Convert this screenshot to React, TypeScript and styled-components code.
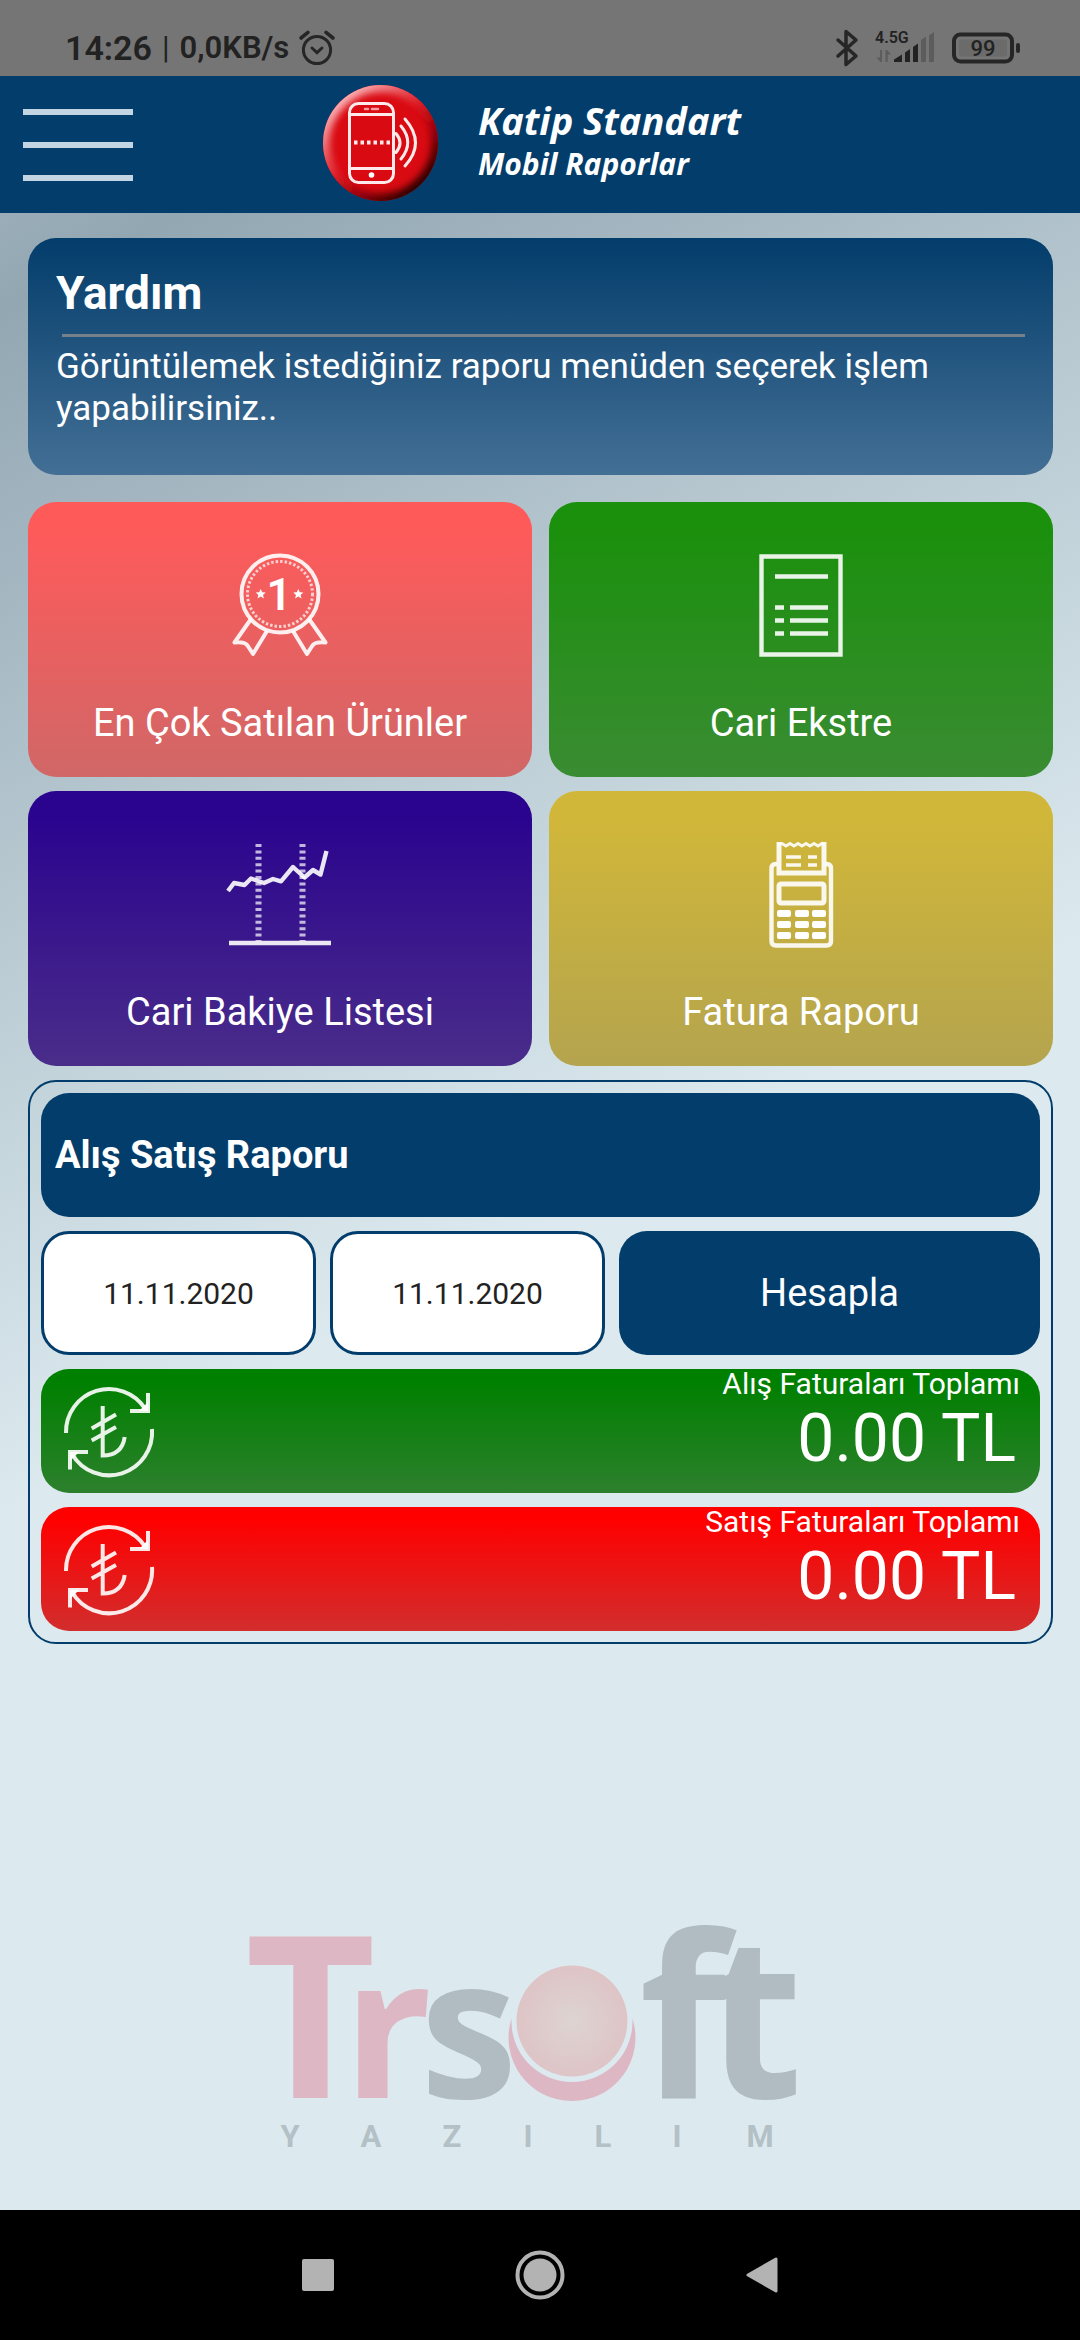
import React, { useState } from "react";
import styled, { createGlobalStyle } from "styled-components";

const navy = "#033d6b";
const sans = `Roboto, "Noto Sans", sans-serif`;

const GlobalStyle = createGlobalStyle`
  *, *::before, *::after { box-sizing: border-box; }
  body { margin: 0; font-family: ${sans}; }
  h1, h2, p { margin: 0; }
  button, input { font-family: inherit; margin: 0; }
  svg { display: block; flex: none; overflow: visible; }
`;

const Screen = styled.div`
  display: flex;
  flex-direction: column;
  min-height: 100vh;
`;

const StatusBar = styled.div`
  display: flex;
  align-items: flex-end;
  justify-content: space-between;
  height: 76px;
  padding: 0 60px 8px 65px;
  background: #757575;
  color: #222;
`;

const StatusGroup = styled.div<{ $gap: number }>`
  display: flex;
  align-items: center;
  gap: ${(p) => p.$gap}px;
  height: 40px;
`;

const StatusText = styled.span<{ $size: number; $weight?: number }>`
  font-size: ${(p) => p.$size}px;
  font-weight: ${(p) => p.$weight ?? 600};
  line-height: 40px;
`;

const Header = styled.header`
  display: grid;
  grid-template-columns: 1fr auto 1fr;
  align-items: center;
  height: 137px;
  padding: 0 23px;
  background: ${navy};
`;

const MenuButton = styled.button`
  display: flex;
  flex-direction: column;
  gap: 27px;
  width: 110px;
  padding: 0;
  border: 0;
  background: none;
`;

const MenuBar = styled.span`
  height: 6px;
  background: #c3d5e3;
`;

const Brand = styled.div`
  display: flex;
  align-items: center;
  gap: 40px;
  padding: 0 16px 4px 0;
`;

const BrandText = styled.div`
  color: #fff;
  font-family: "Open Sans", "Noto Sans", sans-serif;
  font-weight: 700;
  font-style: italic;
`;

const BrandName = styled.h1`
  font-size: 38px;
  line-height: 42px;
`;

const BrandSub = styled.p`
  font-size: 30px;
  line-height: 46px;
`;

const Main = styled.main`
  flex: 1;
  display: flex;
  flex-direction: column;
  padding: 25px 27px 50px 28px;
  background: linear-gradient(152deg, #9aadb9 0, #93a7b3 84px, #dceaef 1150px);
`;

const HelpCard = styled.section`
  padding: 28px 28px 45px;
  border-radius: 28px;
  background: linear-gradient(${navy}, #436f95);
  color: #fff;
`;

const HelpTitle = styled.h2`
  font-size: 46px;
  line-height: 54px;
`;

const Rule = styled.hr`
  height: 3px;
  margin: 14px 0 9px 6px;
  border: 0;
  background: #74808a;
`;

const HelpText = styled.p`
  font-size: 35px;
  line-height: 42px;
`;

const Tiles = styled.nav`
  display: grid;
  grid-template-columns: 1fr 1fr;
  gap: 14px 17px;
  margin: 27px 0 14px;
`;

const Tile = styled.button<{ $from: string; $to: string }>`
  display: flex;
  flex-direction: column;
  align-items: center;
  gap: 42px;
  padding: 51px 16px 30px;
  border: 0;
  border-radius: 28px;
  background: linear-gradient(${(p) => p.$from} 8%, ${(p) => p.$to});
  color: #fff;
  font-size: 38px;
  line-height: 48px;
`;

const Panel = styled.section`
  display: grid;
  gap: 14px;
  padding: 11px;
  border: 2px solid ${navy};
  border-radius: 28px;
`;

const PanelTitle = styled.h2`
  padding: 0 14px;
  border-radius: 28px;
  background: ${navy};
  color: #fff;
  font-size: 38px;
  line-height: 124px;
`;

const Filters = styled.form`
  display: grid;
  grid-template-columns: 275fr 275fr 421fr;
  gap: 14px;
`;

const DateInput = styled.input`
  min-width: 0;
  height: 124px;
  padding: 0;
  border: 3px solid ${navy};
  border-radius: 28px;
  background: #fff;
  color: #222;
  font-size: 30px;
  text-align: center;
`;

const CalcButton = styled.button`
  border: 0;
  border-radius: 28px;
  background: ${navy};
  color: #fff;
  font-size: 38px;
`;

const Total = styled.div<{ $from: string; $to: string }>`
  display: flex;
  align-items: center;
  justify-content: space-between;
  min-height: 124px;
  padding: 0 20px 0 23px;
  border-radius: 28px;
  background: linear-gradient(${(p) => p.$from} 10%, ${(p) => p.$to});
  color: #fff;
`;

const TotalText = styled.div`
  align-self: flex-start;
  text-align: right;
`;

const TotalLabel = styled.p`
  font-size: 30px;
  line-height: 30px;
`;

const TotalValue = styled.p`
  padding-right: 4px;
  font-size: 66px;
  line-height: 80px;
`;

const Footer = styled.footer`
  display: flex;
  justify-content: center;
  margin-top: auto;
  padding: 60px 40px 0 0;
`;

const SystemBar = styled.nav`
  display: flex;
  justify-content: center;
  height: 130px;
  background: #000;
`;

const SystemButton = styled.button`
  display: flex;
  align-items: center;
  justify-content: center;
  width: 222px;
  padding: 0;
  border: 0;
  background: none;
`;

const AlarmIcon = () => (
  <svg width="36" height="36" viewBox="0 0 36 36" fill="none" stroke="#262626" strokeWidth="3" strokeLinecap="round" aria-hidden="true">
    <circle cx="18" cy="20" r="13.6" />
    <path d="M13 18l5 4.6 5-4.6" />
    <path d="M2 8l7-5.600M34 8l-7-5.600" strokeWidth="3.6" />
  </svg>
);

const BluetoothIcon = () => (
  <svg width="22" height="36" viewBox="0 0 22 36" fill="none" stroke="#262626" strokeWidth="3.500" strokeLinejoin="round" strokeLinecap="round" aria-hidden="true">
    <path d="M2 10l18 16-10 8.500V1.500L20 10 2 26" />
  </svg>
);

const SignalIcon = () => (
  <svg width="60" height="36" viewBox="0 0 60 36" role="img" aria-label="4.5G">
    <text x="0" y="13" fontFamily="Roboto, sans-serif" fontSize="16" fontWeight="600" fill="#222">4.5G</text>
    <g fill="#5c5c5c">
      <path d="M5 20h2v12H5.500L1.500 27.500H5zM10.500 20H12l4 4.500h-3.300V32h-2.200z" />
      <path d="M46 10l5-3.500V32h-5zM54 5.500L59 2v30h-5z" />
    </g>
    <path d="M19 29.500l8-5V32h-8zM30 22.500l5-3.500V32h-5zM38 17l5-3.500V32h-5z" fill="#222" />
  </svg>
);

const BatteryIcon = () => (
  <svg width="68" height="32" viewBox="0 0 68 32" role="img" aria-label="99">
    <rect x="2" y="2.500" width="58" height="27" rx="6.500" fill="none" stroke="#262626" strokeWidth="4" />
    <rect x="7" y="7.500" width="48" height="17" rx="2" fill="#6b6b6b" />
    <rect x="64" y="11" width="4" height="10" rx="2" fill="#262626" />
    <text x="31" y="24" textAnchor="middle" fontFamily="Roboto, sans-serif" fontSize="22" fontWeight="500" fill="#222">99</text>
  </svg>
);

const PhoneLogo = () => (
  <svg width="115" height="116" viewBox="0 0 115 116" fill="none" aria-hidden="true">
    <defs>
      <clipPath id="disc"><ellipse cx="57.500" cy="58" rx="57.500" ry="58" /></clipPath>
      <filter id="soft" x="-20%" y="-20%" width="140%" height="140%"><feGaussianBlur stdDeviation="3.500" /></filter>
      <linearGradient id="bevel" x1="0.150" y1="0.100" x2="0.850" y2="0.900">
        <stop offset="0" stopColor="#fbb9bd" />
        <stop offset="0.450" stopColor="#e0202a" />
        <stop offset="0.650" stopColor="#a8050b" />
        <stop offset="1" stopColor="#1c0000" />
      </linearGradient>
    </defs>
    <g clipPath="url(#disc)">
      <rect width="115" height="116" fill="#d90a12" />
      <circle cx="57.500" cy="58" r="58" stroke="url(#bevel)" strokeWidth="15" filter="url(#soft)" />
    </g>
    <g stroke="#ffe9ea" strokeWidth="3" strokeLinecap="round">
      <rect x="26.500" y="18.500" width="44" height="79" rx="9" />
      <path d="M27 29.500h43M27 83.500h43" />
      <path d="M42 24h3M49 24h6" strokeWidth="2.500" stroke="#f59aa0" />
      <path d="M31 57.500h37" strokeWidth="4" strokeDasharray="3.500 3" strokeLinecap="butt" />
      <path d="M73 48.500q8 9.500 0 19M78 41q13.500 16.500 0 33M82 34q21 24 0 47" />
    </g>
    <circle cx="48.500" cy="90" r="2.800" fill="#fff" />
  </svg>
);

const line = { width: 104, height: 104, viewBox: "0 0 104 104", fill: "none", stroke: "#fff", strokeOpacity: 0.9, strokeWidth: 4.4, "aria-hidden": true };

const BadgeIcon = () => (
  <svg {...line} strokeWidth={4} strokeLinejoin="round">
    <circle cx="52" cy="41" r="38.500" />
    <circle cx="52" cy="41" r="32.500" strokeWidth="3" strokeDasharray="2.500 2" strokeOpacity="0.700" />
    <path d="M23 66L6.500 89.500q10-1 13 3l5.500 8.500L39 78M81 66l16.500 23.500q-10-1-13 3l-5.500 8.500L65 78" />
    <text x="51" y="57" textAnchor="middle" fontFamily="Roboto, sans-serif" fontSize="44" fontWeight="600" fill="#fff" stroke="none">1</text>
    <path d="M32.700 36l1.500 3.300 3.500.3-2.700 2.400.9 3.500-3.200-1.900-3.200 1.900.9-3.500-2.700-2.400 3.500-.3zM70.300 36l1.500 3.300 3.500.3-2.700 2.400.9 3.500-3.200-1.900-3.200 1.900.9-3.500-2.700-2.400 3.500-.3z" fill="#fff" stroke="none" />
  </svg>
);

const StatementIcon = () => (
  <svg {...line}>
    <path d="M12.500 3.500h79v98h-79z" />
    <path d="M26 23.500h53M41 54.500h38M41 67.500h38M41 80.500h38M26 54.500h9M26 67.500h9M26 80.500h9" />
  </svg>
);

const TrendIcon = () => (
  <svg {...line}>
    <path d="M1 101h102" />
    <path d="M30.500 2v97M74.500 2v97" strokeWidth="6" strokeDasharray="3 3.400" strokeOpacity="0.700" />
    <path d="M0 49l6-8 10.500 2 6.500-6.500L36 41l9-4 8 2.300L65 25l11.500 10.500L85 28l7.500 4.500L98.500 9" strokeLinejoin="round" />
  </svg>
);

const keyCols = [28, 46, 63];
const keyRows = [68, 79, 90];

const PosIcon = () => (
  <svg {...line}>
    <path d="M28 22h-1q-4.500 0-4.500 4.500V99q0 4.500 4.500 4.500h50.500q4.500 0 4.500-4.500V26.500q0-4.500-4.500-4.500h-1" />
    <path d="M30 0v31h45V0" strokeWidth="5" />
    <path d="M29 2.500l4-1 4 2.500 4-2.500 4 2.500 4-2.500 4 2.500 4-2.500 4 2.500 4-2.500 4 2.500 4-2.500 3 1" strokeWidth="3" />
    <path d="M37 15h15M37 23h15M59 15h9M59 23h9" strokeWidth="3.500" />
    <rect x="30" y="42" width="45" height="19" rx="2" strokeWidth="5" />
    {keyRows.map((y) => keyCols.map((x) => (
      <rect key={`${x}-${y}`} x={x} y={y} width="14" height="7" rx="2" fill="#fff" stroke="none" />
    )))}
  </svg>
);

const LiraIcon = () => (
  <svg width="90" height="90" viewBox="0 0 90 90" fill="none" stroke="#fff" strokeOpacity="0.900" strokeWidth="4" aria-hidden="true">
    <path d="M2 47A43 43 0 0 1 81 22.500M88 43A43 43 0 0 1 8 68" />
    <path d="M84 7v18H66M6 83.500V66h18" />
    <path d="M75 25l9-9v9zM15 66l-9 9v-9z" fill="#fff" stroke="none" />
    <path d="M38.700 20v49.500Q58 69.500 60.700 51M27.700 42.500L52 28.500M27.700 54.500L52 41" />
  </svg>
);

const logoFont = `"Open Sans", "Noto Sans", sans-serif`;

const TrsoftLogo = () => (
  <svg width="560" height="260" viewBox="240 1900 560 260" role="img" aria-label="Trsoft Yazılım">
    <defs>
      <radialGradient id="ball">
        <stop offset="0" stopColor="#ddd4d1" />
        <stop offset="1" stopColor="#dec4c6" />
      </radialGradient>
    </defs>
    <g fontFamily={logoFont} fontWeight="700">
      <text y="2098" fontSize="226" fill="#deb7c5" x="244">T</text>
      <text y="2098" fontSize="196" fill="#deb7c5" x="342">r</text>
      <text y="2098" fontSize="196" fill="#b0bcc1" x="419">s</text>
      <text y="2098" fontSize="226" fill="#b0bcc1" x="638 704">ft</text>
    </g>
    <circle cx="571" cy="2021" r="55.500" fill="url(#ball)" />
    <path d="M510.600 2018A63.500 63.500 0 1 0 631.400 2018A60.500 60.500 0 1 1 510.600 2018" fill="#deb7c5" />
    <text y="2147" fontFamily={sans} fontSize="31" fontWeight="700" fill="#b3c0c5" textAnchor="middle" x="289 370 451 527 602 676 759">YAZILIM</text>
  </svg>
);

const tiles = [
  { label: "En Çok Satılan Ürünler", from: "#ff5a5a", to: "#d16767", Icon: BadgeIcon },
  { label: "Cari Ekstre", from: "#1a900c", to: "#3a8c32", Icon: StatementIcon },
  { label: "Cari Bakiye Listesi", from: "#2a038e", to: "#4a2d8a", Icon: TrendIcon },
  { label: "Fatura Raporu", from: "#d1b739", to: "#b4a44e", Icon: PosIcon },
];

const totals = [
  { label: "Alış Faturaları Toplamı", value: "0.00 TL", from: "#008000", to: "#2d802d" },
  { label: "Satış Faturaları Toplamı", value: "0.00 TL", from: "#ff0000", to: "#d22d2d" },
];

export default function App() {
  const [start, setStart] = useState("11.11.2020");
  const [end, setEnd] = useState("11.11.2020");

  return (
    <Screen>
      <GlobalStyle />
      <StatusBar>
        <StatusGroup $gap={10}>
          <StatusText $size={34}>14:26</StatusText>
          <StatusText $size={31} $weight={400}>|</StatusText>
          <StatusText $size={31}>0,0KB/s</StatusText>
          <AlarmIcon />
        </StatusGroup>
        <StatusGroup $gap={17}>
          <BluetoothIcon />
          <SignalIcon />
          <BatteryIcon />
        </StatusGroup>
      </StatusBar>

      <Header>
        <MenuButton type="button" aria-label="Menü">
          <MenuBar />
          <MenuBar />
          <MenuBar />
        </MenuButton>
        <Brand>
          <PhoneLogo />
          <BrandText>
            <BrandName>Katip Standart</BrandName>
            <BrandSub>Mobil Raporlar</BrandSub>
          </BrandText>
        </Brand>
      </Header>

      <Main>
        <HelpCard>
          <HelpTitle>Yardım</HelpTitle>
          <Rule />
          <HelpText>Görüntülemek istediğiniz raporu menüden seçerek işlem yapabilirsiniz..</HelpText>
        </HelpCard>

        <Tiles>
          {tiles.map(({ label, from, to, Icon }) => (
            <Tile key={label} type="button" $from={from} $to={to}>
              <Icon />
              {label}
            </Tile>
          ))}
        </Tiles>

        <Panel>
          <PanelTitle>Alış Satış Raporu</PanelTitle>
          <Filters onSubmit={(e) => e.preventDefault()}>
            <DateInput aria-label="Başlangıç tarihi" value={start} onChange={(e) => setStart(e.target.value)} />
            <DateInput aria-label="Bitiş tarihi" value={end} onChange={(e) => setEnd(e.target.value)} />
            <CalcButton type="submit">Hesapla</CalcButton>
          </Filters>
          {totals.map((t) => (
            <Total key={t.label} $from={t.from} $to={t.to}>
              <LiraIcon />
              <TotalText>
                <TotalLabel>{t.label}</TotalLabel>
                <TotalValue>{t.value}</TotalValue>
              </TotalText>
            </Total>
          ))}
        </Panel>

        <Footer>
          <TrsoftLogo />
        </Footer>
      </Main>

      <SystemBar>
        <SystemButton type="button" aria-label="Son uygulamalar">
          <svg width="32" height="32"><rect width="32" height="32" rx="2" fill="#b3b3b3" /></svg>
        </SystemButton>
        <SystemButton type="button" aria-label="Ana ekran">
          <svg width="50" height="50">
            <circle cx="25" cy="25" r="22.500" fill="none" stroke="#b3b3b3" strokeWidth="4" />
            <circle cx="25" cy="25" r="16.500" fill="#b3b3b3" />
          </svg>
        </SystemButton>
        <SystemButton type="button" aria-label="Geri">
          <svg width="32" height="36"><path d="M2 18L30 2v32z" fill="#b3b3b3" stroke="#b3b3b3" strokeWidth="3" strokeLinejoin="round" /></svg>
        </SystemButton>
      </SystemBar>
    </Screen>
  );
}
